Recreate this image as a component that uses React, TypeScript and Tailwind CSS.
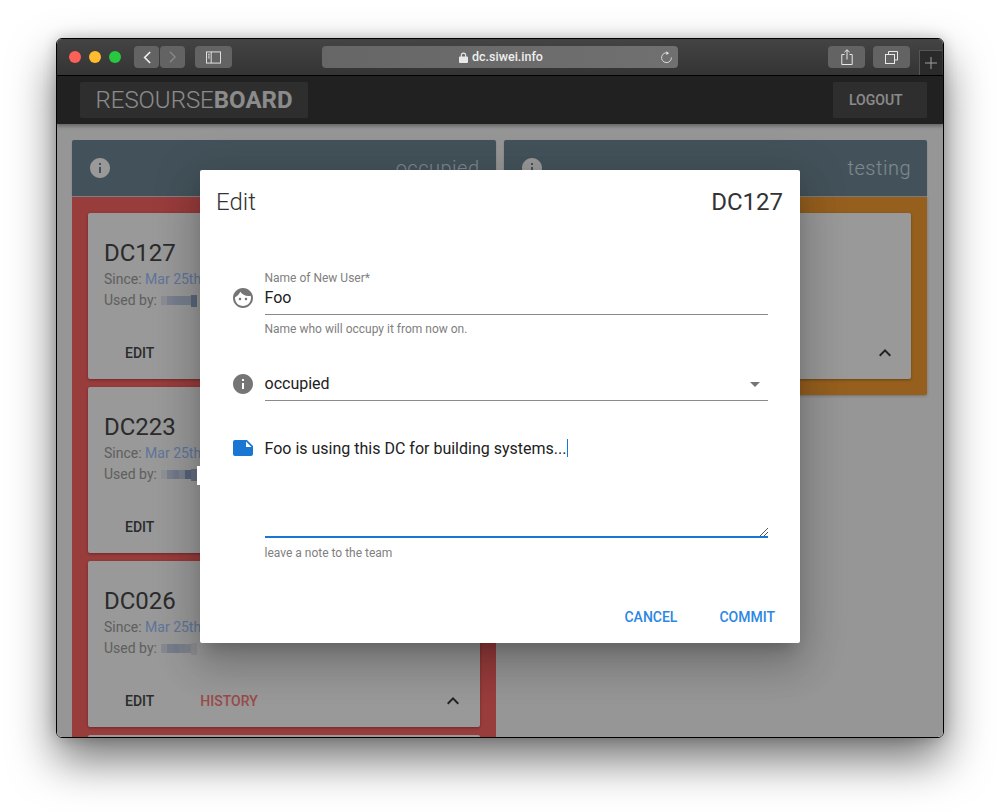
import React from "react";

const FACE = "M9 11.75c-.69 0-1.25.56-1.25 1.25s.56 1.25 1.25 1.25 1.25-.56 1.25-1.25-.56-1.25-1.25-1.25zm6 0c-.69 0-1.25.56-1.25 1.25s.56 1.25 1.25 1.25 1.25-.56 1.25-1.25-.56-1.25-1.25-1.25zM12 2C6.48 2 2 6.48 2 12s4.48 10 10 10 10-4.48 10-10S17.52 2 12 2zm0 18c-4.41 0-8-3.59-8-8 0-.29.02-.58.05-.86 2.36-1.05 4.23-2.98 5.21-5.37C11.07 8.33 14.05 10 17.42 10c.78 0 1.53-.09 2.25-.26.21.71.33 1.47.33 2.26 0 4.41-3.59 8-8 8z";
const INFO = "M12 2C6.48 2 2 6.48 2 12s4.48 10 10 10 10-4.48 10-10S17.52 2 12 2zm1 15h-2v-6h2v6zm0-8h-2V7h2v2z";
const NOTE = "M22 10l-6-6H4c-1.1 0-2 .9-2 2v12.01c0 1.1.9 1.99 2 1.99l16-.01c1.1 0 2-.89 2-1.99v-8zm-7-4.5l5.5 5.5H15V5.5z";
const UP = "M12 8l-6 6 1.41 1.41L12 10.83l4.59 4.58L18 14z";
const DOWN = "M7 10l5 5 5-5z";

function Mi({ d, className }: { d: string; className?: string }) {
  return (
    <svg viewBox="0 0 24 24" className={className} fill="currentColor">
      <path d={d} />
    </svg>
  );
}

function Mosaic({ cells }: { cells: string[] }) {
  return (
    <span className="ml-[4px] inline-flex h-[12px] items-center">
      {cells.map((c, i) => (
        <span key={i} className={i === cells.length - 1 ? "h-[12px] w-[6px]" : "h-[9px] w-[6px]"} style={{ background: c }} />
      ))}
    </span>
  );
}

function Card({ name, cells }: { name: string; cells: string[] }) {
  return (
    <div className="flex h-[166px] flex-col rounded-[2px] bg-white shadow-[0_1px_3px_rgba(0,0,0,.3)]">
      <div className="px-4 pt-6">
        <div className="text-[24px] leading-8 text-[#484848]">{name}</div>
        <div className="text-[14px] leading-[21px] text-[#9e9e9e]">
          Since: <span className="text-[#a0c4ff]">Mar 25th</span>
        </div>
        <div className="flex items-center text-[14px] leading-[21px] text-[#9e9e9e]">
          Used by:
          <Mosaic cells={cells} />
        </div>
      </div>
      <div className="mt-auto flex h-[52px] items-center pl-[37px] pr-[15px] text-[14px] font-medium">
        <span className="text-[#484848]">EDIT</span>
        <span className="ml-[46px] text-[#ff7c7c]">HISTORY</span>
        <Mi d={UP} className="ml-auto h-6 w-6 text-[#3a3a3a]" />
      </div>
    </div>
  );
}

function Strip({ label }: { label: string }) {
  return (
    <div className="flex h-[56px] items-center justify-between rounded-t-[2px] bg-[#718996] pl-4 pr-4 shadow-[0_1px_2px_rgba(0,0,0,.2)]">
      <Mi d={INFO} className="h-6 w-6 text-white" />
      <span className="text-[20px] font-light tracking-[0.5px] text-[#d4e4ec]">{label}</span>
    </div>
  );
}

function ToolBtn({ children, className }: { children: React.ReactNode; className?: string }) {
  return (
    <div className={`flex h-[22px] items-center justify-center rounded-[4px] bg-[#636363] ${className ?? ""}`}>
      {children}
    </div>
  );
}

export default function App() {
  const m1 = ["#e8ecf4", "#ccd8ee", "#c4d2ea", "#c4d2ea", "#c8d4ea", "#98acd0"];
  const m2 = ["#eef1f6", "#c8d4ea", "#bccae4", "#ccd6ea", "#8fa4cb", "#a8b8d6"];
  const m3 = ["#dfe5f0", "#c8d2e6", "#c4cfe4", "#ccd5e8", "#d2daea", "#e8ebf2"];
  return (
    <div className="h-[811px] w-[999px] overflow-hidden bg-white pl-[56px] pt-[38px] font-['Roboto',sans-serif]">
      <div className="relative flex h-[700px] w-[888px] flex-col overflow-hidden rounded-[6px] border border-black shadow-[0_22px_45px_rgba(0,0,0,.55),0_0_14px_rgba(0,0,0,.2)]">
        {/* browser toolbar */}
        <div className="flex h-[37px] shrink-0 items-center border-b border-black bg-gradient-to-b from-[#444444] to-[#343434] pl-3">
          <span className="h-3 w-3 rounded-full bg-[#fe5f57]" />
          <span className="ml-2 h-3 w-3 rounded-full bg-[#febc2e]" />
          <span className="ml-2 h-3 w-3 rounded-full bg-[#28c840]" />
          <ToolBtn className="ml-[13px] w-[25px]">
            <svg viewBox="0 0 12 16" className="h-[15px] w-[11px]" fill="none" stroke="#f0f0f0" strokeWidth="1.8">
              <path d="M10 2 4 8l6 6" />
            </svg>
          </ToolBtn>
          <ToolBtn className="ml-px w-[25px] bg-[#565656]">
            <svg viewBox="0 0 12 16" className="h-[14px] w-[11px]" fill="none" stroke="#8a8a8a" strokeWidth="1.4">
              <path d="M3 2l6 6-6 6" />
            </svg>
          </ToolBtn>
          <ToolBtn className="ml-[10px] w-[37px]">
            <svg viewBox="0 0 16 14" className="h-[13px] w-[15px]" fill="none" stroke="#e8e8e8" strokeWidth="1">
              <rect x="0.5" y="1" width="15" height="12" />
              <path d="M5.5 1v12M2 3.5h2M2 5.5h2M2 7.5h2" />
            </svg>
          </ToolBtn>
          <div className="relative ml-[90px] flex h-[22px] w-[356px] items-center justify-center rounded-[4px] bg-gradient-to-r from-[#666666] to-[#707070] pl-[2px] text-[12.5px] font-medium text-[#eeeeee]">
            <svg viewBox="0 0 10 12" className="mr-[4px] h-[11px] w-[9px]" fill="#e8e8e8">
              <path d="M2 5V3.5a3 3 0 0 1 6 0V5h1a1 1 0 0 1 1 1v5a1 1 0 0 1-1 1H1a1 1 0 0 1-1-1V6a1 1 0 0 1 1-1zm1.2 0h3.6V3.5a1.8 1.8 0 0 0-3.6 0z" />
            </svg>
            dc.siwei.info
            <svg viewBox="0 0 14 14" className="absolute right-[5px] h-[13px] w-[13px]" fill="none" stroke="#e0e0e0" strokeWidth="1">
              <path d="M8.8 2.2A5.3 5.3 0 1 0 12.3 7" />
              <path d="M6.8.4l3 1.9-3 1.9z" fill="#e0e0e0" stroke="none" />
            </svg>
          </div>
          <ToolBtn className="ml-[150px] w-[37px]">
            <svg viewBox="0 0 12 16" className="h-[16px] w-[12px]" fill="none" stroke="#e8e8e8" strokeWidth="1">
              <path d="M3.5 5.5H.8v10h10.4v-10H8.5M6 10.5V.8M3.4 3.2 6 .8l2.6 2.4" />
            </svg>
          </ToolBtn>
          <ToolBtn className="ml-2 w-[37px]">
            <svg viewBox="0 0 13 13" className="h-[13px] w-[13px]" fill="none" stroke="#e8e8e8" strokeWidth="1">
              <path d="M3.5 3V.5h9V9H9.5" />
              <rect x="0.5" y="3.5" width="9" height="9" />
            </svg>
          </ToolBtn>
          <div className="ml-[9px] flex h-[25px] w-[23px] items-center justify-center self-end border-l border-t border-[#555] bg-[#2a2a2a] text-[#a0a0a0]">
            <svg viewBox="0 0 12 12" className="h-[12px] w-[12px]" stroke="currentColor" strokeWidth="1">
              <path d="M6 0v12M0 6h12" />
            </svg>
          </div>
        </div>

        {/* page */}
        <div className="relative min-h-0 flex-1 overflow-hidden bg-[#fafafa]">
          <div className="flex h-12 items-center justify-between bg-[#383838] pl-[23px] pr-4 shadow-[0_2px_4px_rgba(0,0,0,.35)]">
            <div className="flex h-9 w-[228px] items-center justify-center rounded-[2px] bg-[#4e4e4e] text-[24px] font-light leading-none text-[#e8e8e8]">
              RESOURSE<span className="font-bold">BOARD</span>
            </div>
            <div className="flex h-9 w-[94px] items-center rounded-[2px] bg-[#4e4e4e] pl-4 text-[14px] font-medium text-[#e8e8e8]">
              LOGOUT
            </div>
          </div>
          <div className="grid grid-cols-2 gap-2 pl-[15px] pr-4 pt-4">
            <div>
              <Strip label="occupied" />
              <div className="mt-px flex flex-col gap-2 rounded-b-[2px] bg-[#ff6464] p-4">
                <Card name="DC127" cells={m1} />
                <Card name="DC223" cells={m2} />
                <Card name="DC026" cells={m3} />
                <div className="h-[166px] rounded-[2px] bg-white" />
              </div>
            </div>
            <div>
              <Strip label="testing" />
              <div className="mt-px rounded-b-[2px] bg-[#fa9f32] p-4 shadow-[0_1px_3px_rgba(0,0,0,.25)]">
                <div className="flex h-[166px] items-end justify-end rounded-[2px] bg-white pb-[14px] pr-[14px] shadow-[0_1px_3px_rgba(0,0,0,.3)]">
                  <Mi d={UP} className="h-6 w-6 text-[#3a3a3a]" />
                </div>
              </div>
            </div>
          </div>

          {/* backdrop */}
          <div className="absolute inset-0 bg-black/40" />

          {/* dialog */}
          <div className="absolute left-[143px] top-[94px] h-[473px] w-[600px] rounded-[2px] bg-white shadow-[0_11px_15px_-7px_rgba(0,0,0,.2),0_24px_38px_3px_rgba(0,0,0,.14),0_9px_46px_8px_rgba(0,0,0,.12)]">
            {/* stray light fleck from the redaction, next to the dialog edge */}
            <span className="absolute left-[-3px] top-[296px] h-[19px] w-[3px] bg-white" />
            <div className="flex items-center justify-between pl-4 pr-[17px] pt-4 text-[24px] leading-8 text-[#333]">
              <span className="font-light">Edit</span>
              <span>DC127</span>
            </div>

            <div className="mt-[52px] flex items-start gap-[9.5px] pl-[31px] pr-[32.5px]">
              <Mi d={FACE} className="mt-4 h-6 w-6 shrink-0 text-[#757575]" />
              <div className="flex-1">
                <div className="h-[14px] text-[12px] leading-[16px] text-[#808080]">Name of New User*</div>
                <div className="h-[31px] border-b border-[#8a8a8a] pt-[4px] text-[16px] leading-5 text-[#212121]">Foo</div>
                <div className="mt-[6px] h-[14px] text-[12px] leading-[16px] text-[#808080]">Name who will occupy it from now on.</div>
              </div>
            </div>

            <div className="mt-[38px] flex items-start gap-[9.5px] pl-[31px] pr-[32.5px]">
              <Mi d={INFO} className="-mt-px h-6 w-6 shrink-0 text-[#757575]" />
              <div className="flex h-[28px] flex-1 items-start justify-between border-b border-[#8a8a8a] pr-px pt-px text-[16px] leading-5 text-[#212121]">
                occupied
                <Mi d={DOWN} className="-mt-[2px] h-6 w-6 text-[#757575]" />
              </div>
            </div>

            <div className="mt-[37px] flex items-start gap-[9.5px] pl-[31px] pr-[32.5px]">
              <Mi d={NOTE} className="-mt-[2px] h-6 w-6 shrink-0 text-[#1976d2]" />
              <div className="flex-1">
                <div className="relative h-[100px] border-b-2 border-[#1976d2] pt-px text-[16px] leading-5 text-[#212121]">
                  Foo is using this DC for building systems...
                  <span className="ml-px inline-block h-[18px] w-px bg-[#1976d2] align-top" />
                  <svg viewBox="0 0 8 8" className="absolute bottom-0 right-0 h-2 w-2" fill="none" stroke="#555" strokeWidth="1">
                    <path d="M0 8 8 0M4 8l4-4" />
                  </svg>
                </div>
                <div className="mt-[7px] h-[14px] text-[12px] leading-[16px] text-[#808080]">leave a note to the team</div>
              </div>
            </div>

            <div className="mt-[40px] flex justify-end pr-[9px] text-[14px] font-medium text-[#2b87e3]">
              <div className="flex h-9 items-center px-4">CANCEL</div>
              <div className="ml-[10px] flex h-9 items-center px-4">COMMIT</div>
            </div>
          </div>
        </div>
      </div>
    </div>
  );
}
